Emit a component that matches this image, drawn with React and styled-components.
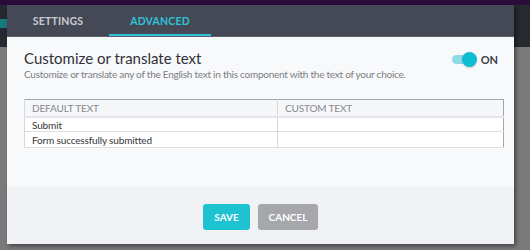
import React, { useState } from 'react';
import styled, { createGlobalStyle } from 'styled-components';

const GlobalStyle = createGlobalStyle`
  html, body {
    margin: 0;
    padding: 0;
    width: 530px;
    height: 250px;
    overflow: hidden;
    font-family: Lato, "Open Sans", sans-serif;
  }
`;

const Page = styled.div`
  position: relative;
  width: 530px;
  height: 250px;
  background: #7a7a7a;
  display: flex;
  flex-direction: column;
`;

const TopStrip = styled.div`
  height: 5px;
  background: #2a0b3a;
`;

const AppBar = styled.div`
  height: 42px;
  background: #262a30;
  display: flex;
  align-items: center;
`;

const AppAccent = styled.div`
  width: 8px;
  height: 9px;
  margin-top: -6px;
  background: #177a80;
`;

const Modal = styled.div`
  position: absolute;
  left: 7px;
  top: 5px;
  width: 507px;
  height: 239px;
  display: flex;
  flex-direction: column;
  background: #f8f9fa;
  box-shadow: 2px 2px 4px rgba(0, 0, 0, 0.45);
`;

const TabBar = styled.div`
  height: 31px;
  background: #444955;
  display: flex;
  flex-shrink: 0;
  border-bottom: 1px solid #5b606b;
`;

const Tab = styled.div`
  width: 102px;
  display: flex;
  align-items: center;
  justify-content: center;
  font-size: 10.5px;
  font-weight: 700;
  letter-spacing: 0.2px;
  color: ${(p) => (p.$active ? '#2dc4d8' : '#c9ccd2')};
  box-shadow: ${(p) => (p.$active ? 'inset 0 -2px 0 #2dc4d8' : 'none')};
`;

const Body = styled.div`
  flex: 1;
  padding: 12px 10px 0 17px;
`;

const HeadRow = styled.div`
  display: flex;
  justify-content: space-between;
  align-items: center;
`;

const Title = styled.h2`
  margin: 0;
  font-size: 15px;
  font-weight: 400;
  color: #2f3238;
  line-height: 18px;
`;

const Subtitle = styled.p`
  margin: 0;
  font-size: 10px;
  letter-spacing: -0.25px;
  color: #7b7e84;
  line-height: 14px;
  white-space: nowrap;
`;

const ToggleWrap = styled.div`
  display: flex;
  align-items: center;
  gap: 7px;
  padding-right: 6px;
  margin-top: 3px;
`;

const Track = styled.div`
  position: relative;
  width: 22px;
  height: 9px;
  border-radius: 5px;
  background: #8fdbe6;
  margin-left: 4px;
`;

const Knob = styled.div`
  position: absolute;
  right: -3px;
  top: -3px;
  width: 15px;
  height: 15px;
  border-radius: 50%;
  background: #10bcd4;
  box-shadow: 0 1px 2px rgba(0, 0, 0, 0.2);
`;

const ToggleLabel = styled.span`
  font-size: 11px;
  font-weight: 700;
  color: #3b3e44;
`;

const Table = styled.table`
  margin-top: 18px;
  width: 480px;
  border-collapse: collapse;
  border: 1px solid #a3a6ab;
  background: #fff;
  font-size: 10px;
  letter-spacing: -0.15px;
`;

const Th = styled.th`
  text-align: left;
  font-weight: 400;
  color: #85888e;
  background: #f6f7f9;
  padding: 0 7px;
  height: 16px;
  border-left: 1px solid #d6d8dc;
  border-bottom: 2px solid #e4e6ea;
  width: ${(p) => p.$w || 'auto'};
`;

const Td = styled.td`
  color: #33363b;
  padding: 0 7px;
  height: ${(p) => p.$h || '13px'};
  border-left: 1px solid #d6d8dc;
  border-bottom: 1px solid #dcdee2;
`;

const Footer = styled.div`
  height: 55px;
  flex-shrink: 0;
  background: #f0f2f6;
  display: flex;
  justify-content: center;
  align-items: center;
  gap: 8px;
  padding-top: 2px;
`;

const Button = styled.button`
  height: 26px;
  width: ${(p) => p.$w};
  border: none;
  border-radius: 3px;
  font-family: inherit;
  font-size: 10px;
  font-weight: 700;
  color: #fff;
  background: ${(p) => (p.$primary ? '#1ec3d2' : '#a6a7ab')};
`;

const rows = ['Submit', 'Form successfully submitted'];

export default function App() {
  const [on] = useState(true);
  return (
    <>
      <GlobalStyle />
      <Page>
        <TopStrip />
        <AppBar>
          <AppAccent />
        </AppBar>
        <Modal>
          <TabBar>
            <Tab>SETTINGS</Tab>
            <Tab $active>ADVANCED</Tab>
          </TabBar>
          <Body>
            <HeadRow>
              <Title>Customize or translate text</Title>
              <ToggleWrap>
                <Track>{on && <Knob />}</Track>
                <ToggleLabel>ON</ToggleLabel>
              </ToggleWrap>
            </HeadRow>
            <Subtitle>
              Customize or translate any of the English text in this component with the text of your choice.
            </Subtitle>
            <Table>
              <thead>
                <tr>
                  <Th $w="238px">DEFAULT TEXT</Th>
                  <Th>CUSTOM TEXT</Th>
                </tr>
              </thead>
              <tbody>
                {rows.map((r, i) => (
                  <tr key={r}>
                    <Td $h={i === rows.length - 1 ? '15px' : '13px'}>{r}</Td>
                    <Td />
                  </tr>
                ))}
              </tbody>
            </Table>
          </Body>
          <Footer>
            <Button $primary $w="47px">SAVE</Button>
            <Button $w="60px">CANCEL</Button>
          </Footer>
        </Modal>
      </Page>
    </>
  );
}
